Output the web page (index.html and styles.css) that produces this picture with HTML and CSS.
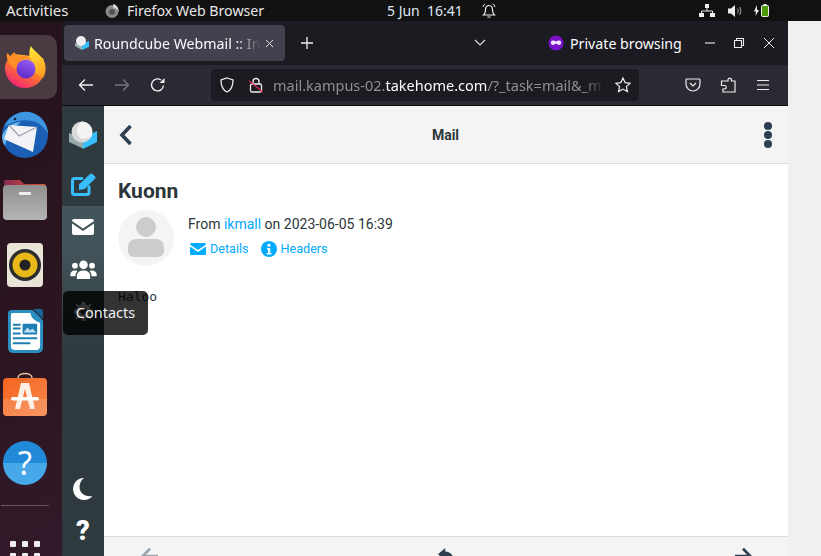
FILE: index.html
```html
<!DOCTYPE html>
<html lang="en">
<head>
<meta charset="utf-8">
<title>Roundcube Webmail</title>
<link rel="stylesheet" href="styles.css">
</head>
<body>
<div class="desktop">
  <header class="topbar">
    <span class="activities">Activities</span>
    <span class="appname">
      <svg class="appicon" viewBox="0 0 16 16"><circle cx="8" cy="8.500" r="6.500" fill="#8a8a8a"/><circle cx="8" cy="9" r="3" fill="#555"/><path d="M9 1c4 1 6 4 5.500 8-1-3-3-4-5-4z" fill="#d8d8d8"/></svg>
      Firefox Web Browser
    </span>
    <span class="clock">5 Jun&nbsp; 16:41</span>
    <svg class="bell" viewBox="0 0 14 16"><path d="M7 2.500c-2.500 0-3.500 2-3.500 4.500 0 2.500-.8 3.800-2 5h11c-1.200-1.200-2-2.500-2-5 0-2.500-1-4.500-3.500-4.500zM5.500 14h3" fill="none" stroke="#eee" stroke-width="1.200"/><path d="M1 4c.3-1.500 1-2.500 2-3.200M13 4c-.3-1.500-1-2.500-2-3.200" fill="none" stroke="#eee"/></svg>
    <span class="tray">
      <svg class="tray-net" viewBox="0 0 16 14"><path d="M6 0h4v4H6zM0 9h5v4H0zM11 9h5v4h-5z" fill="#eee"/><path d="M8 4v3M2.500 9V7h11v2" fill="none" stroke="#eee"/></svg>
      <svg class="tray-vol" viewBox="0 0 16 14"><path d="M0 4.500h3L7 1v12L3 9.500H0z" fill="#eee"/><path d="M9.500 4.500c1 1.500 1 3.500 0 5M11.500 3c1.800 2.500 1.800 5.500 0 8" fill="none" stroke="#aaa"/></svg>
      <svg class="tray-bat" viewBox="0 0 16 14"><path d="M3 1 0 7.500h2L1.500 12 5 6H3z" fill="#eee"/><rect x="7.500" y="1.500" width="7" height="11" rx="1" fill="#4e9a06" stroke="#eee"/><rect x="9.500" y="0" width="3" height="1.500" fill="#eee"/></svg>
    </span>
  </header>

  <div class="workspace">
    <nav class="dock">
      <div class="dock-item dock-active">
        <svg viewBox="0 0 42 44" class="dock-svg ff">
          <defs>
            <linearGradient id="ffb" x1=".85" y1=".15" x2=".3" y2="1"><stop offset="0" stop-color="#ffc92e"/><stop offset=".45" stop-color="#ff7a2b"/><stop offset="1" stop-color="#f0207a"/></linearGradient>
            <linearGradient id="ffy" x1=".4" y1="0" x2=".6" y2="1"><stop offset="0" stop-color="#ffe83a"/><stop offset="1" stop-color="#ff9a20"/></linearGradient>
            <linearGradient id="ffp" x1=".7" y1="0" x2=".3" y2="1"><stop offset="0" stop-color="#9a5cf0"/><stop offset="1" stop-color="#5a2bc8"/></linearGradient>
          </defs>
          <path d="M1 23a20 20 0 1 0 40 0c0-4-1-7-2-10L27 11 10 9C5 12 1 17 1 23z" fill="url(#ffb)"/>
          <path d="M27 1c2 5 11 8 14 18 1.500 6 0 11-2 14l-12-8c3-4 1-7-1-11-1-4-1-9 1-13z" fill="url(#ffy)"/>
          <circle cx="22" cy="24" r="9.500" fill="url(#ffp)"/>
          <path d="M3 8c1.500 1 2.500 2 3 3.500C7 9.500 9 8.500 10.500 7c1 2.500 2.500 3.500 5 4.500 4-1.500 10-.5 13 4-4-2-9-2.500-12.500 0-3 2-4 5-4 8.500-6-3-10.500-10-9-15.500z" fill="#ff8f26"/>
        </svg>
      </div>
      <div class="dock-item">
        <svg viewBox="0 0 48 48" class="dock-svg tb">
          <circle cx="24" cy="25" r="23" fill="#1a5fb4"/>
          <path d="M3 17C8 6 20-1 32 3c9 3 15 12 15 21-4-8-10-12-16-13C22 9 11 11 3 17z" fill="#3f96e0"/>
          <path d="M1 26C5 16 13 12 20 12c-7 5-14 12-16 24-2-3-3-6-3-10z" fill="#67b4ee"/>
          <path d="M8 15l28 2-4 25L3 29z" fill="#f2f2f7"/>
          <path d="M8 15l10 11 18-9" fill="none" stroke="#9aa3b0" stroke-width="1.200"/>
          <circle cx="14" cy="9" r="1.300" fill="#123"/>
        </svg>
      </div>
      <div class="dock-item">
        <svg viewBox="0 0 44 42" class="dock-svg folder">
          <defs>
            <linearGradient id="fo" x1="0" y1="0" x2="1" y2="0"><stop offset="0" stop-color="#8a2a55"/><stop offset="1" stop-color="#e0562a"/></linearGradient>
            <linearGradient id="fg" x1="0" y1="0" x2="0" y2="1"><stop offset="0" stop-color="#8f8f8f"/><stop offset="1" stop-color="#b5b5b5"/></linearGradient>
          </defs>
          <path d="M1 4a2 2 0 0 1 2-2h14l4 4h20a2 2 0 0 1 2 2v8H1z" fill="url(#fo)"/>
          <rect x="0" y="7" width="44" height="35" rx="4" fill="url(#fg)"/>
          <rect x="16" y="14" width="12" height="3" rx="1" fill="#eee"/>
        </svg>
      </div>
      <div class="dock-item">
        <svg viewBox="0 0 38 46" class="dock-svg rb">
          <rect x="1" y="1" width="36" height="44" rx="4" fill="#e9e4d8"/>
          <circle cx="19" cy="23" r="16" fill="#2d2d2d"/>
          <circle cx="19" cy="23" r="12.500" fill="#e9b91a"/>
          <circle cx="19" cy="23" r="5.500" fill="#222"/>
        </svg>
      </div>
      <div class="dock-item">
        <svg viewBox="0 0 38 46" class="dock-svg lo">
          <path d="M5 1h21c4 3 8 7 11 11v28a5 5 0 0 1-5 5H6a5 5 0 0 1-5-5V5a4 4 0 0 1 4-4z" fill="#2a8fc0"/>
          <path d="M6 4h18c1 5 4 8 10 10v24a4 4 0 0 1-4 4H8a4 4 0 0 1-4-4V6a2 2 0 0 1 2-2z" fill="#fff"/>
          <path d="M27 0h7a3 3 0 0 1 3 3v7z" fill="#14699a"/>
          <path d="M6 15h8v2H6zM6 19h8v2H6zM6 24h8v2H6zM6 29h25v2H6zM6 34h18v2H6z" fill="#1f7fb3"/>
          <rect x="16" y="15" width="15" height="11" rx="1" fill="#1f7fb3"/>
          <path d="M17 24l4-5 3 3 2-2 4 4z" fill="#bfe0f2"/>
        </svg>
      </div>
      <div class="dock-item">
        <svg viewBox="0 0 44 44" class="dock-svg shop">
          <defs>
            <linearGradient id="sh" x1="0" y1="0" x2="1" y2="1"><stop offset="0" stop-color="#f4651f"/><stop offset="1" stop-color="#f8894f"/></linearGradient>
          </defs>
          <path d="M15 7V6c0-6 14-6 14 0v1" fill="none" stroke="#e8c59a" stroke-width="1.500"/>
          <rect x="0" y="6" width="44" height="38" rx="4" fill="url(#sh)"/>
          <path d="M0 27h44v13a4 4 0 0 1-4 4H4a4 4 0 0 1-4-4z" fill="#fff" opacity=".12"/>
          <path d="M18 11h8l6 26h-5l-5-20-5 20h-5z" fill="#fdeee6"/>
          <rect x="8" y="25" width="28" height="3.500" rx="1.700" fill="#fff"/>
        </svg>
      </div>
      <div class="dock-item">
        <div class="help-ball">?</div>
      </div>
      <div class="dock-sep"></div>
      <div class="dock-grid">
        <i></i><i></i><i></i><i></i><i></i><i></i>
      </div>
    </nav>

    <main class="window">
      <div class="tabbar">
        <div class="tab">
          <svg class="favicon" viewBox="0 0 16 16"><path d="M1 9l7 6 7-3V6l-7 3z" fill="#37beff"/><path d="M1 8v3l7 4V11z" fill="#9eb4b4"/><circle cx="7" cy="6" r="5" fill="#eee"/></svg>
          <span class="tab-title">Roundcube Webmail :: Inl</span>
          <svg class="tab-x" viewBox="0 0 10 10"><path d="M1 1l8 8M9 1L1 9" stroke="#ddd" stroke-width="1.100"/></svg>
        </div>
        <svg class="plus" viewBox="0 0 12 12"><path d="M6 0v12M0 6h12" stroke="#eee" stroke-width="1.300"/></svg>
        <svg class="chev" viewBox="0 0 12 8"><path d="M1 1l5 5 5-5" fill="none" stroke="#ddd" stroke-width="1.200"/></svg>
        <svg class="mask" viewBox="0 0 16 16"><circle cx="8" cy="8" r="7.500" fill="#7a10c8"/><path d="M3 6.500C4 5 6.500 5.500 8 6.500 9.500 5.500 12 5 13 6.500c.5 2-.5 3.500-2 3.500S9 8.500 8 8.500 6.500 10 5 10 2.500 8.500 3 6.500z" fill="#f0e6ff"/></svg>
        <span class="private">Private browsing</span>
        <svg class="win win-min" viewBox="0 0 12 12"><path d="M1 6h10" stroke="#eee" stroke-width="1.100"/></svg>
        <svg class="win win-max" viewBox="0 0 12 12"><path d="M1.500 3.500h7v7h-7zM3.500 3.500v-2h7v7h-2" fill="none" stroke="#eee" stroke-width="1.100"/></svg>
        <svg class="win win-close" viewBox="0 0 12 12"><path d="M1 1l10 10M11 1L1 11" stroke="#eee" stroke-width="1"/></svg>
      </div>

      <div class="navbar">
        <svg class="nav-ic nav-back" viewBox="0 0 16 14"><path d="M15 7H1.500M7 1.500 1.500 7 7 12.500" fill="none" stroke="#f0f0f0" stroke-width="1.300"/></svg>
        <svg class="nav-ic nav-fwd" viewBox="0 0 16 14"><path d="M1 7h13.500M9 1.500 14.500 7 9 12.500" fill="none" stroke="#77777e" stroke-width="1.300"/></svg>
        <svg class="nav-ic nav-reload" viewBox="0 0 16 16"><path d="M13.500 8.500A6 6 0 1 1 11 3" fill="none" stroke="#f0f0f0" stroke-width="1.400"/><path d="M14.500 1v5h-5z" fill="#f0f0f0"/></svg>
        <div class="urlbar">
          <svg class="shield" viewBox="0 0 14 16"><path d="M7 1l6 2c0 6-1.500 10-6 12C2.500 13 1 9 1 3z" fill="none" stroke="#eee" stroke-width="1.300"/></svg>
          <svg class="lock" viewBox="0 0 14 16"><path d="M4 7V4.500a3 3 0 0 1 6 0V7" fill="none" stroke="#eee" stroke-width="1.300"/><rect x="1.500" y="7" width="11" height="8" rx="1.500" fill="none" stroke="#eee" stroke-width="1.300"/><path d="M0 4l14 11" stroke="#e22850" stroke-width="1.200"/></svg>
          <span class="url"><span class="url-dim">mail.kampus-02.</span><span class="url-host">takehome.com</span><span class="url-dim">/?_task=mail&amp;_m</span></span>
          <svg class="star" viewBox="0 0 16 16"><path d="M8 1l2.100 4.600 5 .6-3.700 3.400 1 5L8 12.100 3.600 14.600l1-5L.9 6.200l5-.6z" fill="none" stroke="#eee" stroke-width="1.200"/></svg>
        </div>
        <svg class="nav-ic pocket" viewBox="0 0 16 14"><path d="M2 1h12a1 1 0 0 1 1 1v4a7 7 0 0 1-14 0V2a1 1 0 0 1 1-1z" fill="none" stroke="#eee" stroke-width="1.200"/><path d="M5 5l3 3 3-3" fill="none" stroke="#eee" stroke-width="1.200"/></svg>
        <svg class="nav-ic puzzle" viewBox="0 0 16 16"><path d="M6 4h2V2.500a1.800 1.800 0 0 1 3.500 0V4H15v11H3v-3h1.500a1.500 1.500 0 0 0 0-3.500H1.500V4z" fill="none" stroke="#eee" stroke-width="1.200"/></svg>
        <svg class="nav-ic burger" viewBox="0 0 14 12"><path d="M1 1.500h12M1 6h12M1 10.500h12" stroke="#eee" stroke-width="1.200"/></svg>
      </div>

      <div class="app">
        <aside class="rail">
          <div class="rail-logo">
            <svg viewBox="0 0 30 28" class="rc-logo"><path d="M1 12v9l15 7V18z" fill="#95a9a9"/><path d="M15 17l14-7v11l-14 7z" fill="#37beff"/><circle cx="14" cy="11" r="10.500" fill="#d9d9d9"/><path d="M14 .5a10.500 10.500 0 0 1 9 15.500c-4 2-8 2-11 1C7 12 8 5 14 .5z" fill="#f3f3f3"/></svg>
          </div>
          <div class="rail-btn rail-compose">
            <svg viewBox="0 0 25 23" class="rail-ic compose-ic"><path d="M12 5.500H3.500a2 2 0 0 0-2 2V19.500a2 2 0 0 0 2 2H16a2 2 0 0 0 2-2v-7" fill="none" stroke="#37beff" stroke-width="3"/><path d="M8 11.500 19 1c.7-.7 1.700-.7 2.500 0l2.500 2.500c.7.7.7 1.500 0 2.300L13.500 16l-5.500 1z" fill="#37beff"/></svg>
          </div>
          <div class="rail-group">
            <div class="rail-btn">
              <svg viewBox="0 0 22 16" class="rail-ic mail-ic"><path d="M2 0h18a2 2 0 0 1 2 2L11 9.500 0 2a2 2 0 0 1 2-2z" fill="#fff"/><path d="M0 4.500 11 12 22 4.500V14a2 2 0 0 1-2 2H2a2 2 0 0 1-2-2z" fill="#fff"/></svg>
            </div>
            <div class="rail-btn">
              <svg viewBox="0 0 28 20" class="rail-ic people-ic"><circle cx="14" cy="5" r="4.500" fill="#fff"/><circle cx="5" cy="6" r="3" fill="#fff"/><circle cx="23" cy="6" r="3" fill="#fff"/><path d="M7 20v-3c0-4 3-6 7-6s7 2 7 6v3z" fill="#fff"/><path d="M0 16c0-3 2-5 5-5 1 0 2 0 2.500 1C6 13.500 5.500 15 5.500 17H1a1 1 0 0 1-1-1zM28 16c0-3-2-5-5-5-1 0-2 0-2.500 1 1.500 1.500 2 3 2 5H27a1 1 0 0 0 1-1z" fill="#fff"/></svg>
            </div>
            <div class="rail-btn">
              <svg viewBox="0 0 20 20" class="rail-ic gear-ic"><circle cx="10" cy="10" r="5.500" fill="none" stroke="#fff" stroke-width="4.500"/><path d="M8 0h4v4H8zM8 16h4v4H8zM0 8h4v4H0zM16 8h4v4h-4zM3 1.500 6 4.500 4.500 6 1.500 3zM17 1.500 18.500 3l-3 3L14 4.500zM3 18.500 1.500 17l3-3L6 15.500zM17 18.500 14 15.500l1.500-1.500 3 3z" fill="#fff"/></svg>
            </div>
          </div>
          <div class="rail-spacer"></div>
          <div class="rail-moon">
            <svg viewBox="0 0 20 22" class="moon-ic"><path d="M11 0a11 11 0 1 0 8.500 18C12 19.500 6.500 15 6.500 9 6.500 5.500 8 2 11 0z" fill="#fff"/></svg>
          </div>
          <div class="rail-help">?</div>
        </aside>

        <section class="mailpane">
          <header class="mailhead">
            <svg class="back-ic" viewBox="0 0 14 22"><path d="M11.500 2 3 11l8.500 9" fill="none" stroke="#2c3e50" stroke-width="3.600"/></svg>
            <h2 class="mailhead-title">Mail</h2>
            <div class="dots"><i></i><i></i><i></i></div>
          </header>
          <article class="message">
            <h1 class="subject">Kuonn</h1>
            <div class="meta">
              <div class="avatar">
                <svg viewBox="0 0 56 56" class="avatar-svg"><circle cx="28" cy="17" r="10" fill="#ccc"/><path d="M10 37c0-5 4-8 8-8h20c4 0 8 3 8 8v4a6 6 0 0 1-6 6H16a6 6 0 0 1-6-6z" fill="#ccc"/></svg>
              </div>
              <div class="meta-text">
                <div class="from">From <a class="link">ikmall</a> on 2023-06-05 16:39</div>
                <div class="meta-links">
                  <a class="link meta-link"><svg viewBox="0 0 16 12" class="ml-ic mail"><path d="M1.500 0h13A1.500 1.500 0 0 1 16 1.500L8 7 0 1.500A1.500 1.500 0 0 1 1.500 0z" fill="#00aaff"/><path d="M0 3.500 8 9l8-5.500v7A1.500 1.500 0 0 1 14.500 12h-13A1.500 1.500 0 0 1 0 10.500z" fill="#00aaff"/></svg>Details</a>
                  <a class="link meta-link"><svg viewBox="0 0 16 16" class="ml-ic info"><circle cx="8" cy="8" r="8" fill="#00aaff"/><circle cx="8" cy="4.300" r="1.500" fill="#fff"/><path d="M6 7h3.200v5H10.500v1.500h-5V12H7V8.500H6z" fill="#fff"/></svg>Headers</a>
                </div>
              </div>
            </div>
            <pre class="body-text">Haloo</pre>
          </article>
          <footer class="mailfoot">
            <svg class="foot-ic prev" viewBox="0 0 20 20"><path d="M19 10H3M10 2 2 10l8 8" fill="none" stroke="#9aa5ae" stroke-width="3"/></svg>
            <svg class="foot-ic reply" viewBox="0 0 20 20"><path d="M8 1 0 8l8 7v-4c5 0 8 2 10 6 0-7-4-12-10-12z" fill="#2c3e50"/></svg>
            <svg class="foot-ic next" viewBox="0 0 20 20"><path d="M1 10h16M10 2l8 8-8 8" fill="none" stroke="#2c3e50" stroke-width="3"/></svg>
          </footer>
        </section>
      </div>
    </main>
    <div class="strip"></div>
  </div>
  <div class="tooltip">Contacts</div>
</div>
</body>
</html>
```

FILE: styles.css
```css
* { box-sizing: border-box; }
html, body { margin: 0; padding: 0; overflow: hidden; }
body { width: 821px; height: 556px; font-family: "Roboto", sans-serif; background: #f0f0f0; }
svg { display: block; flex: none; }
.desktop { position: relative; width: 821px; height: 556px; overflow: hidden; display: flex; flex-direction: column; }

.topbar { height: 21px; background: #111; color: #e8e8e8; font: 14.2px/21px "Noto Sans", sans-serif; display: flex; align-items: center; flex: none; }
.activities { margin-left: 6px; width: 98px; font-size: 15px; }
.appname { display: flex; align-items: center; gap: 7px; width: 283px; white-space: nowrap; }
.appicon { width: 16px; height: 16px; }
.clock { font-size: 14px; width: 95px; color: #dfe8f2; white-space: pre; }
.bell { width: 14px; height: 16px; }
.tray { display: flex; align-items: center; margin-left: 203px; }
.tray-net { width: 16px; height: 14px; margin-right: 13px; }
.tray-vol { width: 16px; height: 14px; margin-right: 10px; }
.tray-bat { width: 16px; height: 14px; }

.workspace { flex: 1; display: flex; min-height: 0; }
.dock { width: 62px; flex: none; background: linear-gradient(160deg, #24121c, #2e1623 70%, #321a2a); display: flex; flex-direction: column; padding-top: 14px; }
.dock-item { width: 50px; height: 66px; display: flex; align-items: center; justify-content: center; flex: none; }
.dock-active { width: 57px; height: 64px; padding-right: 7px; background: #4a3a42; border-radius: 0 10px 10px 0; margin-bottom: 2px; }
.dock-svg { width: 44px; height: 44px; }
.dock-svg.ff { width: 42px; height: 44px; }
.dock-svg.tb { width: 48px; height: 48px; }
.dock-svg.folder { height: 42px; margin-top: -3px; }
.dock-svg.rb { width: 38px; height: 46px; margin-top: -2px; }
.dock-svg.lo { width: 37px; height: 45px; margin-top: -2px; }
.dock-svg.shop { margin-top: -8px; }
.help-ball { width: 44px; height: 44px; margin-top: -2px; border-radius: 50%; background: linear-gradient(#2089d8 50%, #46a8e8 50%); color: #fff; font: 32px/44px "Noto Sans", sans-serif; text-align: center; }
.dock-sep { width: 48px; height: 1px; background: #6a5560; margin: 8px 0 0 1px; flex: none; }
.dock-grid { display: grid; grid-template-columns: repeat(3, 6px); gap: 6px; margin: 35px 0 0 10px; flex: none; }
.dock-grid i { width: 6px; height: 6px; border-radius: 1px; background: #eee; }

.window { width: 726px; flex: none; display: flex; flex-direction: column; min-height: 0; }
.tabbar { height: 44px; background: #1c1b22; display: flex; align-items: center; flex: none; padding-left: 2px; }
.tab { width: 221px; height: 36px; background: #42414d; border-radius: 4px; display: flex; align-items: center; padding-left: 10px; color: #fbfbfe; font: 14.2px "Noto Sans", sans-serif; }
.favicon { width: 16px; height: 16px; margin-right: 4px; }
.tab-title { width: 167px; overflow: hidden; white-space: nowrap; -webkit-mask-image: linear-gradient(90deg, #000 85%, transparent); mask-image: linear-gradient(90deg, #000 85%, transparent); }
.tab-x { width: 9px; height: 9px; margin-left: 4px; }
.plus { width: 12px; height: 12px; margin-left: 16px; }
.chev { width: 12px; height: 8px; margin-left: 161px; }
.mask { width: 16px; height: 16px; margin-left: 62px; }
.private { color: #fbfbfe; font: 14.2px "Noto Sans", sans-serif; margin-left: 6px; white-space: nowrap; width: 114px; }
.win { width: 12px; height: 12px; }
.win-min { margin-left: 20px; }
.win-max { margin-left: 17px; }
.win-close { margin-left: 18px; }

.navbar { background: #2b2a33; border-bottom: 1px solid #0c0c0d; display: flex; align-items: center; flex: none; height: 41px; }
.nav-ic { width: 16px; height: 14px; flex: none; }
.nav-back { margin-left: 16px; }
.nav-fwd { margin-left: 20px; }
.nav-reload { height: 16px; margin-left: 20px; }
.urlbar { flex: none; width: 428px; height: 32px; margin-left: 45px; background: #1c1b22; border-radius: 4px; display: flex; align-items: center; padding-left: 9px; font: 14.5px "Noto Sans", sans-serif; color: #fbfbfe; }
.shield { width: 14px; height: 16px; }
.lock { width: 14px; height: 16px; margin-left: 15px; }
.url { width: 333px; flex: none; margin-left: 10px; white-space: nowrap; overflow: hidden; -webkit-mask-image: linear-gradient(90deg, #000 93%, transparent); mask-image: linear-gradient(90deg, #000 93%, transparent); }
.url-dim { color: #8f8f95; }
.url-host { color: #fbfbfe; }
.star { width: 16px; height: 16px; margin-left: 9px; }
.pocket { margin-left: 46px; }
.puzzle { height: 16px; margin-left: 19px; }
.burger { width: 14px; height: 12px; margin-left: 20px; }

.app { flex: 1; display: flex; min-height: 0; background: #fff; }
.rail { width: 42px; flex: none; background: #2f3a3f; display: flex; flex-direction: column; align-items: center; }
.rail-logo { height: 57px; width: 100%; display: flex; align-items: center; justify-content: center; flex: none; }
.rc-logo { width: 30px; height: 28px; }
.rail-btn { height: 42px; width: 100%; display: flex; align-items: center; justify-content: center; flex: none; }
.rail-compose { height: 43px; }
.rail-group { width: 100%; height: 144px; flex: none; background: linear-gradient(#43545a, #43545a 30%, #2f3a3f); }
.rail-ic { width: 24px; height: 22px; }
.compose-ic { width: 25px; height: 23px; }
.mail-ic { width: 22px; height: 16px; }
.people-ic { width: 27px; height: 19px; }
.gear-ic { width: 19px; height: 19px; }
.rail-spacer { flex: 1; }
.rail-moon { height: 34px; display: flex; align-items: center; justify-content: center; flex: none; }
.moon-ic { width: 20px; height: 22px; }
.rail-help { height: 50px; flex: none; color: #fff; font: 900 27px/50px "Roboto", sans-serif; }

.mailpane { width: 684px; display: flex; flex-direction: column; min-height: 0; }
.mailhead { height: 58px; background: #f4f4f4; border-bottom: 1px solid #dcdcdc; display: grid; grid-template-columns: 1fr auto 1fr; align-items: center; flex: none; padding: 0 16px 0 15px; }
.back-ic { width: 14px; height: 22px; }
.mailhead-title { margin: 0; font: 700 14px "Roboto", sans-serif; color: #2c363a; }
.dots { display: flex; flex-direction: column; gap: 1px; width: 8px; justify-self: end; }
.dots i { width: 8px; height: 8px; border-radius: 50%; background: #2c3e50; }
.message { flex: 1; min-height: 0; padding: 15px 14px 0; color: #2c363a; }
.subject { margin: 0; font: 700 21px/24px "Roboto", sans-serif; }
.meta { display: flex; margin-top: 7px; }
.avatar { width: 56px; height: 56px; border-radius: 50%; background: #f4f4f4; flex: none; }
.avatar-svg { width: 56px; height: 56px; }
.meta-text { margin-left: 14px; padding-top: 4px; }
.from { font-size: 14px; line-height: 21px; }
.link { color: #00aaff; }
.meta-links { display: flex; font-size: 12.6px; line-height: 16px; margin-top: 6px; padding-left: 2px; gap: 12px; }
.meta-link { display: flex; align-items: center; gap: 4px; }
.ml-ic.mail { width: 16px; height: 12px; }
.ml-ic.info { width: 16px; height: 16px; }
.body-text { margin: 24px 0 0; font: 13px/14px "DejaVu Sans Mono", monospace; }
.mailfoot { height: 20px; background: #f4f4f4; border-top: 1px solid #d4dde0; flex: none; display: flex; justify-content: space-between; padding: 10px 36px 0 37px; overflow: hidden; }
.foot-ic { width: 18px; height: 18px; }
.strip { flex: 1; background: #f0f0f0; }

.tooltip { position: absolute; left: 63px; top: 291px; width: 85px; height: 44px; background: rgba(0, 0, 0, .8); border-radius: 5px; color: #f0f0f0; font: 14.5px/43px "Noto Sans", sans-serif; text-align: center; }
```
